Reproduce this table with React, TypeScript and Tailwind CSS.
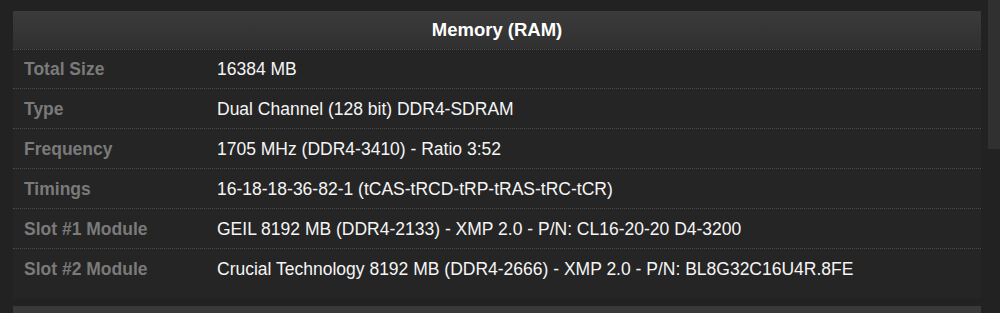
const rows: { label: string; value: string }[] = [
  { label: "Total Size", value: "16384 MB" },
  { label: "Type", value: "Dual Channel (128 bit) DDR4-SDRAM" },
  { label: "Frequency", value: "1705 MHz (DDR4-3410) - Ratio 3:52" },
  { label: "Timings", value: "16-18-18-36-82-1 (tCAS-tRCD-tRP-tRAS-tRC-tCR)" },
  { label: "Slot #1 Module", value: "GEIL 8192 MB (DDR4-2133) - XMP 2.0 - P/N: CL16-20-20 D4-3200" },
  {
    label: "Slot #2 Module",
    value: "Crucial Technology 8192 MB (DDR4-2666) - XMP 2.0 - P/N: BL8G32C16U4R.8FE",
  },
];

const App = () => {
  return (
    <div className="relative h-[313px] w-[1000px] overflow-hidden bg-[#222222] font-['Liberation_Sans',Arial,sans-serif]">
      {/* scrollbar thumb */}
      <div className="absolute right-0 top-0 h-[149px] w-[12px] bg-[#303030]" />

      <div className="pl-[13px] pr-[19px] pt-[11px]">
        <div className="bg-[#252525] pb-[9px]">
          <div className="flex h-[38px] items-center justify-center bg-gradient-to-b from-[#3b3b3b] to-[#303030] text-[18.5px] font-bold text-white">
            Memory (RAM)
          </div>
          {rows.map((row, index: number) => (
            <div
              key={index}
              className={`flex h-[40px] items-center pt-[1px] ${
                index < rows.length - 1 ? "border-b border-dotted border-[#4a4a4a]" : ""
              } ${index === 0 ? "border-t border-dotted border-t-[#4a4a4a]" : ""}`}
            >
              <div className="w-[204px] shrink-0 pl-[11px] text-[17.5px] font-bold text-[#7a7a7a]">
                {row.label}
              </div>
              <div className="text-[17.5px] text-[#f5f5f5]">{row.value}</div>
            </div>
          ))}
        </div>
        <div className="mt-[8px] h-[20px] bg-[#393939]" />
      </div>
    </div>
  );
};

export default App;
